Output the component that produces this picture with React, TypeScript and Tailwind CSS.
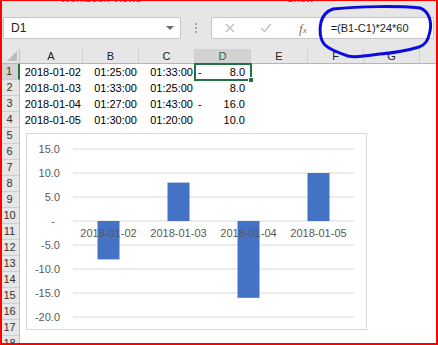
import React from 'react';

const cols = [
  { name: 'A', w: 'w-[63px]' },
  { name: 'B', w: 'w-[56px]' },
  { name: 'C', w: 'w-[56px]' },
  { name: 'D', w: 'w-[56px]' },
  { name: 'E', w: 'w-[57px]' },
  { name: 'F', w: 'w-[56px]' },
  { name: 'G', w: 'w-[56px]' },
  { name: '', w: 'flex-1' },
];

const data = [
  { a: '2018-01-02', b: '01:25:00', c: '01:33:00', neg: true, d: '8.0' },
  { a: '2018-01-03', b: '01:33:00', c: '01:25:00', neg: false, d: '8.0' },
  { a: '2018-01-04', b: '01:27:00', c: '01:43:00', neg: true, d: '16.0' },
  { a: '2018-01-05', b: '01:30:00', c: '01:20:00', neg: false, d: '10.0' },
];

const bars = [
  { label: '2018-01-02', v: -8 },
  { label: '2018-01-03', v: 8 },
  { label: '2018-01-04', v: -16 },
  { label: '2018-01-05', v: 10 },
];

const ticks = [15, 10, 5, 0, -5, -10, -15, -20];

function Chart() {
  // zero line at y=87, 4.8px per unit, 70px per category from x=46
  const y0 = 87;
  const k = 4.8;
  return (
    <div className="absolute left-[26px] top-[133px] w-[341px] h-[197px] bg-white border border-[#d9d9d9]">
      <svg width="341" height="197" className="block">
        {ticks.map((t) => (
          <line key={t} x1="46" x2="327" y1={y0 - t * k} y2={y0 - t * k} stroke="#d9d9d9" strokeWidth="1" />
        ))}
        {ticks.map((t) => (
          <text
            key={'l' + t}
            x={t === 0 ? 28 : 33}
            y={y0 - t * k + 4}
            textAnchor="end"
            fontSize="11"
            fill="#595959"
            fontFamily="Liberation Sans, Arial, sans-serif"
          >
            {t === 0 ? '-' : t.toFixed(1)}
          </text>
        ))}
        {bars.map((b, i) => {
          const cx = 81.5 + i * 70;
          const h = Math.abs(b.v) * k;
          return <rect key={b.label} x={cx - 11} y={b.v > 0 ? y0 - h : y0} width="22" height={h} fill="#4472c4" />;
        })}
        {bars.map((b, i) => (
          <text
            key={'c' + b.label}
            x={81.5 + i * 70}
            y={103}
            textAnchor="middle"
            fontSize="11"
            fill="#595959"
            fontFamily="Liberation Sans, Arial, sans-serif"
          >
            {b.label}
          </text>
        ))}
      </svg>
    </div>
  );
}

function Cell({ w, children, className = '' }: { w: string; children?: React.ReactNode; className?: string }) {
  return <div className={`${w} h-full flex items-center ${className}`}>{children}</div>;
}

export default function App() {
  const rowCount = 18;
  return (
    <div className="relative w-[438px] h-[345px] overflow-hidden bg-white font-['Liberation_Sans',Arial,sans-serif] text-[11px] text-black">
      {/* ribbon remains + formula bar */}
      <div className="bg-[#e6e6e6] h-[49px] flex flex-col">
        <div className="h-[6px] overflow-hidden flex text-[#505050]">
          <span className="ml-[60px] -mt-[8px] leading-[13px]">Workbook Views</span>
          <span className="ml-[145px] -mt-[8px] leading-[13px]">Show</span>
        </div>
        <div className="h-[11px]" />
        <div className="flex h-[22px] pl-[3px]">
          <div className="w-[178px] h-full bg-white border border-[#c6c6c6] flex items-center pl-[7px] pr-[6px] text-[12px] text-[#222]">
            <span className="flex-1">D1</span>
            <span className="w-0 h-0 border-l-[4px] border-r-[4px] border-t-[4px] border-l-transparent border-r-transparent border-t-[#6d6d6d]" />
          </div>
          <div className="w-[30px] h-full flex flex-col items-center justify-center gap-[2px]">
            <span className="w-[2px] h-[2px] bg-[#a8a8a8]" />
            <span className="w-[2px] h-[2px] bg-[#a8a8a8]" />
            <span className="w-[2px] h-[2px] bg-[#a8a8a8]" />
          </div>
          <div className="w-[223px] h-full bg-white border border-[#c6c6c6] flex items-center">
            <svg width="10" height="10" viewBox="0 0 10 10" className="ml-[13px]">
              <path d="M1 1 L9 9 M9 1 L1 9" stroke="#bdbdbd" strokeWidth="1.2" />
            </svg>
            <svg width="12" height="10" viewBox="0 0 12 10" className="ml-[25px]">
              <path d="M1 5 L4.5 8.5 L11 1" stroke="#bdbdbd" strokeWidth="1.2" fill="none" />
            </svg>
            <span className="ml-[27px] font-['Liberation_Serif',serif] italic text-[13px] text-[#6f6f6f] leading-none">
              f<span className="text-[9px]">x</span>
            </span>
            <span className="ml-[24px] text-[#222]">=(B1-C1)*24*60</span>
          </div>
        </div>
      </div>

      {/* column headers */}
      <div className="flex h-[15px] bg-[#e6e6e6] border-b border-[#b5b5b5]">
        <div className="w-[20px] h-full border-r border-[#c0c0c0] flex items-end justify-end pr-[2px] pb-[2px]">
          <svg width="10" height="10">
            <path d="M10 0 L10 10 L0 10 Z" fill="#bcbcbc" />
          </svg>
        </div>
        {cols.map((c) => (
          <div
            key={c.name}
            className={`${c.w} h-full flex items-center justify-center border-r border-[#d0d0d0] ${
              c.name === 'D' ? 'bg-[#d2d2d2] text-[#1e6b40]' : 'text-[#222]'
            }`}
          >
            {c.name}
          </div>
        ))}
      </div>

      {/* grid body */}
      <div className="flex flex-col">
        {Array.from({ length: rowCount }).map((_, i) => {
          const r = data[i];
          return (
            <div key={i} className="flex h-[16px]">
              <div
                className={`w-[20px] h-full flex items-center justify-center border-b border-[#cdcdcd] text-[#333] ${
                  i === 0 ? 'bg-[#d2d2d2] border-r-2 border-r-[#217346]' : 'bg-[#e6e6e6] border-r border-r-[#bcbcbc]'
                }`}
              >
                {i + 1}
              </div>
              <Cell w="w-[63px]" className="justify-end pr-[2px]">{r?.a}</Cell>
              <Cell w="w-[56px]" className="justify-end pr-[2px]">{r?.b}</Cell>
              <Cell w="w-[56px]" className="justify-end pr-[2px]">{r?.c}</Cell>
              <Cell w="w-[56px]" className="relative justify-between pl-[3px] pr-[6px]">
                <span>{r?.neg ? '-' : ''}</span>
                <span>{r?.d}</span>
                {i === 0 && (
                  <>
                    <span className="absolute -left-[1px] -top-[1px] w-[58px] h-[18px] border-2 border-[#217346]" />
                    <span className="absolute left-[53px] top-[13px] w-[6px] h-[6px] bg-[#217346] border border-white" />
                  </>
                )}
              </Cell>
              <Cell w="flex-1" />
            </div>
          );
        })}
      </div>

      <Chart />

      {/* hand-drawn highlight */}
      <svg className="absolute left-0 top-0 pointer-events-none" width="438" height="70">
        <path
          d="M333 9 C360 6 400 6 420 8 C429 11 432 22 430 31 C428 41 425 45 419 47 C406 51 392 53 380 54 C366 56 356 58 348 56 C339 53 330 50 325 45 C320 40 319 30 321 22 C323 15 327 11 333 9 Z"
          stroke="#0b0be0"
          strokeWidth="3"
          fill="none"
          strokeLinejoin="round"
        />
      </svg>

      {/* red frame */}
      <div className="absolute inset-0 border-t border-l-2 border-r-2 border-b-2 border-[#ff0000] pointer-events-none" />
    </div>
  );
}
